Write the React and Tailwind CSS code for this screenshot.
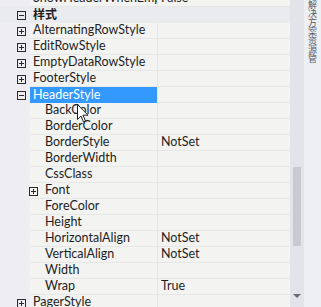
const rows = [
  { type: "prop", name: "ShowHeaderWhenEmpty", value: "False", level: 0 },
  { type: "cat", name: "样式" },
  { type: "prop", name: "AlternatingRowStyle", level: 0, icon: "plus" },
  { type: "prop", name: "EditRowStyle", level: 0, icon: "plus" },
  { type: "prop", name: "EmptyDataRowStyle", level: 0, icon: "plus" },
  { type: "prop", name: "FooterStyle", level: 0, icon: "plus" },
  { type: "prop", name: "HeaderStyle", level: 0, icon: "minus", selected: true },
  { type: "prop", name: "BackColor", level: 1 },
  { type: "prop", name: "BorderColor", level: 1 },
  { type: "prop", name: "BorderStyle", value: "NotSet", level: 1 },
  { type: "prop", name: "BorderWidth", level: 1 },
  { type: "prop", name: "CssClass", level: 1 },
  { type: "prop", name: "Font", level: 1, icon: "plus" },
  { type: "prop", name: "ForeColor", level: 1 },
  { type: "prop", name: "Height", level: 1 },
  { type: "prop", name: "HorizontalAlign", value: "NotSet", level: 1 },
  { type: "prop", name: "VerticalAlign", value: "NotSet", level: 1 },
  { type: "prop", name: "Width", level: 1 },
  { type: "prop", name: "Wrap", value: "True", level: 1 },
  { type: "prop", name: "PagerStyle", level: 0, icon: "plus" },
];

const Box = ({ kind, className }) => (
  <svg width="9" height="9" viewBox="0 0 9 9" className={className}>
    <rect x="0.5" y="0.5" width="8" height="8" fill="none" stroke="#2a2a2a" />
    <line x1="2" y1="4.5" x2="7" y2="4.5" stroke="#2a2a2a" />
    {kind === "plus" && <line x1="4.5" y1="2" x2="4.5" y2="7" stroke="#2a2a2a" />}
  </svg>
);

const Row = ({ row }) => {
  if (row.type === "cat") {
    return (
      <div className="flex h-[16px] items-center bg-[#eaebef]">
        <div className="w-[30px] flex justify-end pr-[4px]">
          <Box kind="minus" />
        </div>
        <span className="pl-[3px] font-bold text-[12px] text-[#1e1e1e]">{row.name}</span>
      </div>
    );
  }
  const pad = row.level === 1 ? "pl-[15px]" : "pl-[3px]";
  const nameCell = row.selected
    ? "bg-[#3399ff] text-white"
    : "bg-[#f3f4f2] text-[#1e1e1e] border-b border-[#e6e8e6]";
  return (
    <div className="flex h-[16px]">
      <div className="w-[30px] bg-[#eeeef2] flex items-center justify-end pr-[4px]">
        {row.icon && <Box kind={row.icon} className={row.level === 1 ? "mr-[-12px] relative" : ""} />}
      </div>
      <div className={`w-[127px] flex items-center overflow-hidden whitespace-nowrap ${pad} ${nameCell} leading-none`}>
        {row.name}
      </div>
      <div className="w-[1px] bg-[#e6e8e6]" />
      <div className="flex-1 flex items-center pl-[3px] bg-[#f3f4f2] border-b border-[#e6e8e6] text-[#1e1e1e] leading-none">
        {row.value}
      </div>
    </div>
  );
};

const Cursor = () => (
  <svg width="12" height="19" viewBox="0 0 12 19" className="absolute left-[77px] top-[104px]">
    <path d="M0.5 0.5 L0.5 15.5 L4 12 L6.5 18 L8.5 17 L6 11.2 L11 11.2 Z" fill="white" stroke="#222" strokeWidth="1" strokeLinejoin="round" />
  </svg>
);

export default function App() {
  return (
    <div
      className="relative w-[321px] h-[307px] overflow-hidden flex bg-[#eeeef2] text-[12.5px]"
      style={{ fontFamily: 'Lato, "Noto Sans CJK SC", sans-serif' }}
    >
      <div className="w-[290px] h-full overflow-hidden">
        <div className="-mt-[9px]">
          {rows.map((r, i) => (
            <Row key={i} row={r} />
          ))}
        </div>
      </div>
      <div className="w-[14px] h-full bg-[#e3e4e9] flex flex-col items-center">
        <div className="mt-[167px] w-[8px] h-[79px] bg-[#c9cad0]" />
        <div className="mt-auto mb-[9px] w-0 h-0 border-l-[4px] border-r-[4px] border-t-[4px] border-l-transparent border-r-transparent border-t-[#6b6c75]" />
      </div>
      <div className="flex-1 h-full bg-[#eeeff3] flex justify-center pt-0">
        <span
          className="text-[9px] leading-[9px] text-[#555a66]"
          style={{ writingMode: "vertical-rl" }}
        >
          解决方案资源管
        </span>
      </div>
      <Cursor />
    </div>
  );
}
